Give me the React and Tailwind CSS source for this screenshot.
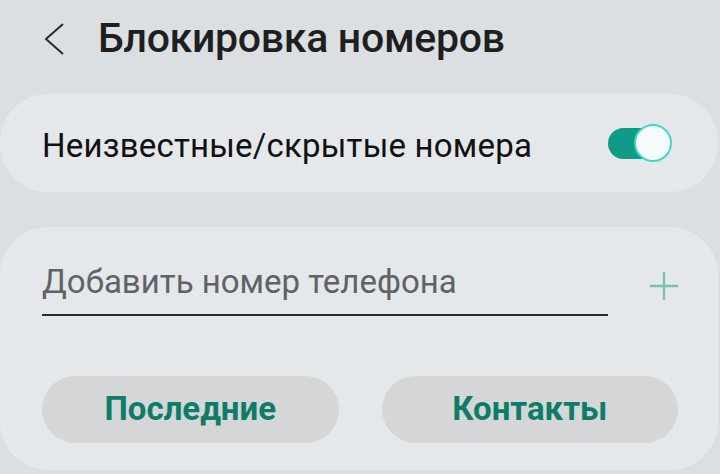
function Toggle() {
    return (
        <div className="relative w-[64px] h-[38px]">
            <div className="absolute left-0 top-[4px] w-[60px] h-[31px] rounded-full bg-[#0e9c86]" />
            <div className="absolute right-0 top-0 w-[38px] h-[38px] rounded-full bg-[#f6fbfb] border-2 border-[#3fd9cb]" />
        </div>
    );
}

export default function App() {
    return (
        <div
            className="w-[720px] h-[474px] bg-[#dcdfe2] overflow-hidden"
            style={{ fontFamily: "Roboto, 'Noto Sans', sans-serif" }}
        >
            {/* Header */}
            <div className="h-[94px] flex items-center pl-[45px] pb-[16px]">
                <svg width="20" height="34" viewBox="0 0 20 34" fill="none">
                    <polyline points="18,2 1,17 18,32" stroke="#2b2b2b" strokeWidth="2" />
                </svg>
                <h1 className="ml-[33px] text-[41px] font-medium tracking-[-0.3px] text-[#1f1f1f]">
                    Блокировка номеров
                </h1>
            </div>

            <div className="pr-[2px]">
                {/* Unknown numbers */}
                <div className="h-[98px] rounded-[48px] bg-[#e5e8ea] flex items-center justify-between pl-[42px] pr-[46px] pt-[6px]">
                    <span className="text-[33px] tracking-[0.2px] text-[#111]">Неизвестные/скрытые номера</span>
                    <div className="-mt-[6px]">
                        <Toggle />
                    </div>
                </div>

                {/* Add number */}
                <div className="mt-[35px] h-[243px] rounded-[48px] bg-[#e5e8ea] pl-[42px] pr-[40px] pt-[30px]">
                    <div className="flex items-center">
                        <div className="flex-1 border-b-2 border-[#2a2b2f] pb-[7px]">
                            <span className="text-[33px] text-[#5f6266]">Добавить номер телефона</span>
                        </div>
                        <div className="w-[70px] flex justify-end">
                            <svg width="28" height="28" viewBox="0 0 28 28">
                                <path d="M14 0v28M0 14h28" stroke="#7bc0b4" strokeWidth="2.4" />
                            </svg>
                        </div>
                    </div>

                    <div className="mt-[60px] flex gap-[43px]">
                        <button className="flex-1 h-[67px] rounded-full bg-[#d5d6d7] text-[33px] font-bold text-[#0f7c69]">
                            Последние
                        </button>
                        <button className="flex-1 h-[67px] rounded-full bg-[#d5d6d7] text-[33px] font-bold text-[#0f7c69]">
                            Контакты
                        </button>
                    </div>
                </div>
            </div>
        </div>
    );
}
